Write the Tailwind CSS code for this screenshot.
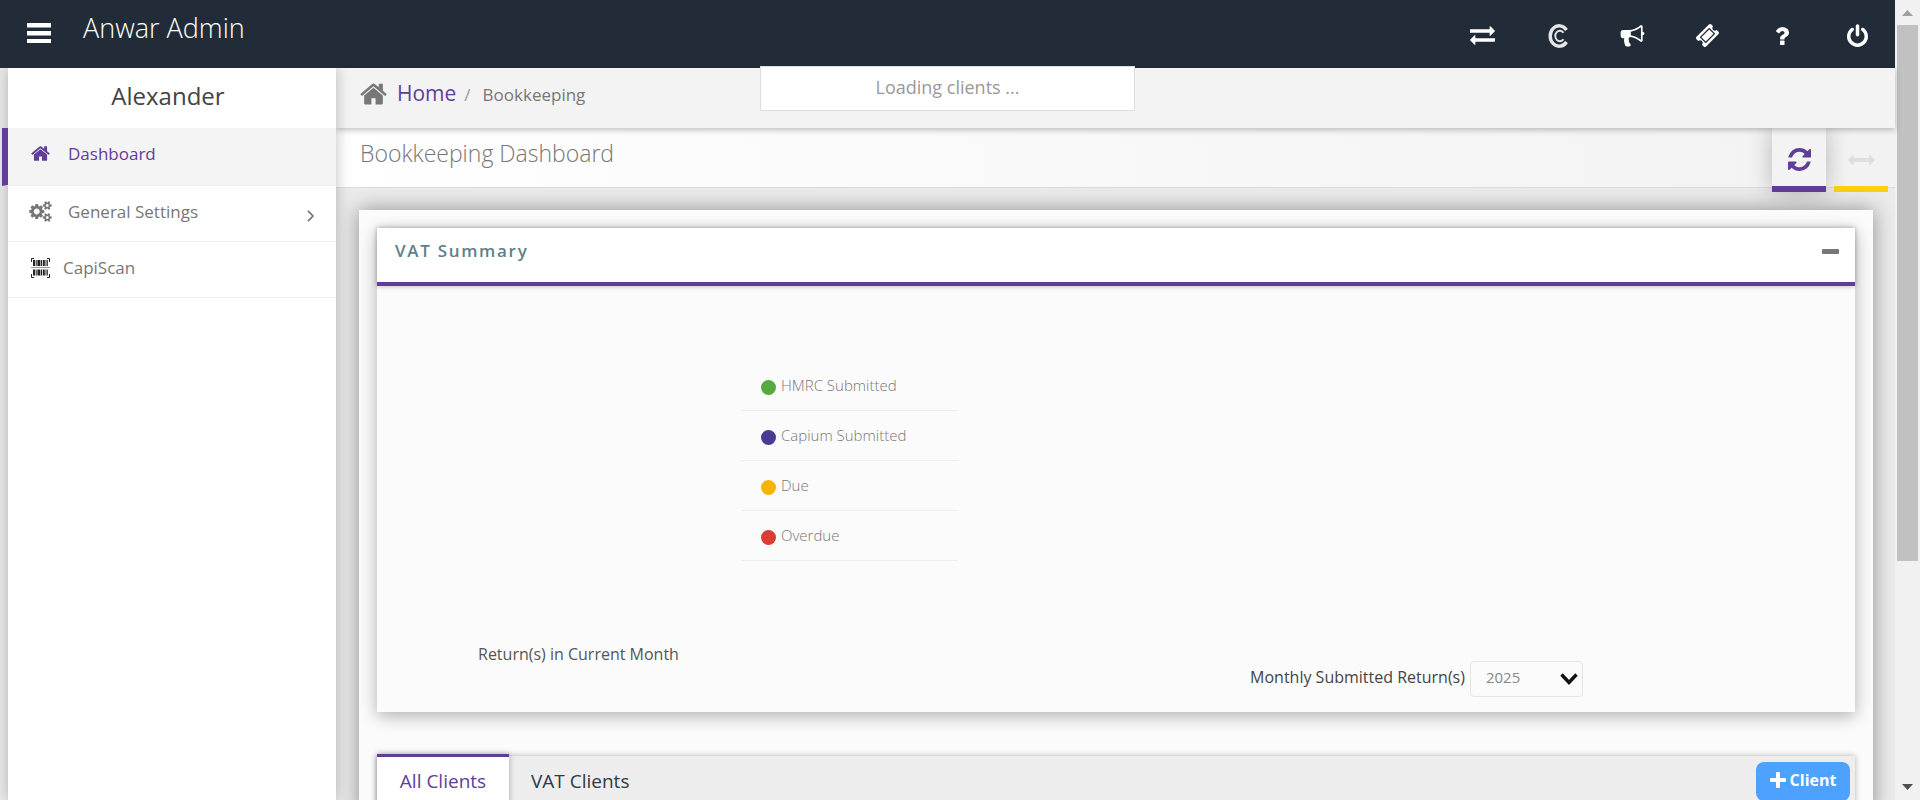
<!DOCTYPE html>
<html lang="en">
<head>
<meta charset="utf-8">
<title>Bookkeeping Dashboard</title>
<script src="https://cdn.jsdelivr.net/npm/@tailwindcss/browser@4"></script>
</head>
<body class="relative flex h-screen overflow-hidden bg-[#ebebeb] font-['Open_Sans','Noto_Sans',sans-serif] text-[#777]">
<svg class="hidden">
  <symbol id="home" viewBox="0 253 1664 1283"><path d="M1408 992v480q0 26-19 45t-45 19H960v-384H704v384H320q-26 0-45-19t-19-45V992q0-1 .5-3t.5-3l575-474 575 474q1 2 1 6zm223-69l-62 74q-8 9-21 11h-3q-13 0-21-7L832 424 140 1001q-12 8-24 7-13-2-21-11l-62-74q-8-10-7-23.500t11-21.500l719-599q32-26 76-26t76 26l244 204V288q0-14 9-23t23-9h192q14 0 23 9t9 23v408l219 182q10 8 11 21.500t-7 23.500z"/></symbol>
</svg>
<div class="flex min-w-0 flex-1 flex-col">
  <header class="flex h-[68px] shrink-0 items-start bg-[#222c38] text-white">
    <button class="ml-[27px] mt-[23px]" aria-label="Toggle menu">
      <svg class="h-5 w-6" viewBox="0 0 24 20" fill="currentColor"><path d="M0 0h24v4.500H0zM0 8h24v4.500H0zM0 16h24v4H0z"/></svg>
    </button>
    <span class="ml-8 text-[27px] font-light leading-14">Anwar Admin</span>
    <nav class="ml-auto flex h-[71px] items-center" aria-label="Tools">
      <button class="flex w-[75px] justify-center" aria-label="Switch"><svg class="h-[19px] w-[25px]" viewBox="0 288 1792 1344" fill="currentColor"><path d="M1792 1184v192q0 13-9.500 22.500t-22.500 9.500H384v192q0 13-9.500 22.500T352 1632q-12 0-24-10L9 1302q-9-9-9-22 0-14 9-23l320-320q9-9 23-9 13 0 22.500 9.500t9.500 22.500v192h1376q13 0 22.500 9.500t9.500 22.500zm0-544q0 14-9 23l-320 320q-9 9-23 9-13 0-22.500-9.500t-9.500-22.500V768H32q-13 0-22.500-9.500T0 736V544q0-13 9.500-22.500T32 512h1376V320q0-14 9-23t23-9q12 0 24 10l319 319q9 9 9 23z"/></svg></button>
      <button class="flex w-[75px] justify-center" aria-label="Capium"><svg class="h-6 w-5" viewBox="0 0 20 24" fill="none" stroke="#e4e6e8"><path stroke-width="3.400" d="M18.500 6A9 10.200 0 1 0 18.500 18"/><path stroke-width="1.900" d="M15.500 8.800A4.600 5.200 0 1 0 15.500 15.200"/></svg></button>
      <button class="flex w-[75px] justify-center" aria-label="Announcements"><svg class="h-[22px] w-[25px]" viewBox="0 128 1792 1664" fill="currentColor"><path d="M1664 640q53 0 90.500 37.500t37.500 90.500-37.500 90.500-90.500 37.500v384q0 52-38 90t-90 38q-417-347-812-380-58 19-91 66t-31 100.500 40 92.500q-20 33-23 65.500t6 58 33.500 55 48 50T768 1664q-29 58-111.500 83t-168.500 11.500-132-55.500q-7-23-29.500-87.500t-32-94.500-23-89-15-101 3.500-98 22-110.500H160q-66 0-113-47T0 864V672q0-66 47-113t113-47h480q435 0 896-384 52 0 90 38t38 90v384zm-128 604V292q-394 302-768 343v270q377 42 768 339z"/></svg></button>
      <button class="flex w-[75px] justify-center" aria-label="Tickets"><svg class="size-[23px]" viewBox="54 54 1685 1685" fill="currentColor"><path d="M1024 452l316 316-572 572-316-316zm-211 979l618-618q19-19 19-45t-19-45l-362-362q-18-18-45-18t-45 18L361 979q-19 19-19 45t19 45l362 362q18 18 45 18t45-18zm889-637l-907 908q-37 37-90.500 37t-90.500-37l-126-126q56-56 56-136t-56-136-136-56-136 56L91 1178q-37-37-37-90.500T91 997L998 91q37-37 90.500-37t90.500 37l125 125q-56 56-56 136t56 136 136 56 136-56l126 125q37 37 37 90.500t-37 90.500z"/></svg></button>
      <button class="flex w-[75px] justify-center" aria-label="Help"><svg class="h-[18px] w-[13px]" viewBox="96 192 924 1280" fill="currentColor"><path d="M704 1192v240q0 16-12 28t-28 12H424q-16 0-28-12t-12-28v-240q0-16 12-28t28-12h240q16 0 28 12t12 28zm316-600q0 54-15.500 101t-35 76.500-55 59.500-57.500 43.500-61 35.500q-41 23-68.500 65t-27.500 67q0 17-12 32.500t-28 15.500H420q-15 0-25.500-18.500T384 1032v-45q0-83 65-156.500T592 722q59-27 84-56t25-76q0-42-46.500-74T547 484q-65 0-108 29-35 25-107 115-13 16-31 16-12 0-25-8L112 511q-13-10-15.500-25t5.500-28q160-266 464-266 80 0 161 31t146 83 106 127.500T1020 592z"/></svg></button>
      <button class="flex w-[75px] justify-center" aria-label="Log out"><svg class="h-[23px] w-[21px]" viewBox="0 0 1536 1664" fill="currentColor"><path d="M1536 896q0 156-61 298t-164 245-245 164-298 61-298-61-245-164-164-245-61-298q0-182 80.500-343T306 283q43-32 95.500-25t83.500 50q32 42 24.500 94.500T461 487q-98 74-151.500 181T256 896q0 104 40.500 198.500T406 1258t163.500 109.500T768 1408t198.500-40.500T1130 1258t109.500-163.500T1280 896q0-121-53.500-228T1075 487q-42-32-49.500-84.500T1050 308q31-43 84-50t95 25q146 110 226.500 271t80.500 342zM896 128v640q0 52-38 90t-90 38-90-38-38-90V128q0-52 38-90t90-38 90 38 38 90z"/></svg></button>
    </nav>
  </header>

  <div class="flex min-h-0 flex-1">
    <aside class="z-10 ml-2 w-[328px] shrink-0 bg-white shadow-[0_0_14px_rgba(0,0,0,0.25)] [clip-path:inset(0_-20px_0_-20px)]">
      <h2 class="h-15 text-center text-2xl leading-14 text-[#444]"><span class="pr-2">Alexander</span></h2>
      <nav class="text-[17px]" aria-label="Main">
        <a href="#" class="-ml-1.5 flex h-[58px] items-center border-b border-l-6 border-b-[#eee] border-l-[#613d98] bg-[#f4f4f4] pb-1.5 pl-[23px] text-[#613d98]">
          <svg class="mr-[18px] h-[15px] w-[19px]" fill="currentColor"><use href="#home"/></svg>Dashboard
        </a>
        <a href="#" class="flex h-14 items-center border-b border-[#eee] pb-1 pl-[21px] pr-[22px]">
          <svg class="mr-4 h-[21px] w-[23px]" viewBox="0 0 1920 1792" fill="currentColor"><path d="M896 896q0-106-75-181t-181-75-181 75-75 181 75 181 181 75 181-75 75-181zm768 512q0-52-38-90t-90-38-90 38-38 90q0 53 37.500 90.500t90.500 37.500 90.500-37.500 37.500-90.500zm0-1024q0-52-38-90t-90-38-90 38-38 90q0 53 37.500 90.500T1536 512t90.500-37.500T1664 384zm-384 421v185q0 10-7 19.500t-16 10.500l-155 24q-11 35-32 76 34 48 90 115 7 11 7 20 0 12-7 19-23 30-82.500 89.500T999 1423q-11 0-21-7l-115-90q-37 19-77 31-11 108-23 155-7 24-30 24H547q-11 0-20-7.500t-10-17.500l-23-153q-34-10-75-31l-118 89q-7 7-20 7-11 0-21-8-144-133-144-160 0-9 7-19 10-14 41-53t47-61q-23-44-35-82l-152-24q-10-1-17-9.500T0 987V802q0-10 7-19.500T23 772l155-24q11-35 32-76-34-48-90-115-7-11-7-20 0-12 7-20 22-30 82-89t79-59q11 0 21 7l115 90q34-18 77-32 11-108 23-154 7-24 30-24h186q11 0 20 7.500t10 17.500l23 153q34 10 75 31l118-89q8-7 20-7 11 0 21 8 144 133 144 160 0 8-7 19-12 16-42 54t-45 60q23 48 34 82l152 23q10 2 17 10.500t7 19.500zm640 533v140q0 16-149 31-12 27-30 52 51 113 51 138 0 4-4 7-122 71-124 71-8 0-46-47t-52-68q-20 2-30 2t-30-2q-14 21-52 68t-46 47q-2 0-124-71-4-3-4-7 0-25 51-138-18-25-30-52-149-15-149-31v-140q0-16 149-31 13-29 30-52-51-113-51-138 0-4 4-7 4-2 35-20t59-34 30-16q8 0 46 46.500t52 67.500q20-2 30-2t30 2q51-71 92-112l6-2q4 0 124 70 4 3 4 7 0 25-51 138 17 23 30 52 149 15 149 31zm0-1024v140q0 16-149 31-12 27-30 52 51 113 51 138 0 4-4 7-122 71-124 71-8 0-46-47t-52-68q-20 2-30 2t-30-2q-14 21-52 68t-46 47q-2 0-124-71-4-3-4-7 0-25 51-138-18-25-30-52-149-15-149-31V314q0-16 149-31 13-29 30-52-51-113-51-138 0-4 4-7 4-2 35-20t59-34 30-16q8 0 46 46.500t52 67.500q20-2 30-2t30 2q51-71 92-112l6-2q4 0 124 70 4 3 4 7 0 25-51 138 17 23 30 52 149 15 149 31z"/></svg>General Settings
          <svg class="ml-auto mt-2 h-3 w-[7px]" viewBox="0 0 7 12" fill="none" stroke="currentColor" stroke-width="1.800"><path d="M1 .8 6 6 1 11.200"/></svg>
        </a>
        <a href="#" class="flex h-14 items-center border-b border-[#eee] pb-1 pl-[23px]">
          <svg class="mr-[13px] h-5 w-[19px]" viewBox="0 0 19 20" fill="none" stroke="#222"><path d="M.5 4V.5H3M16 .5h2.500V4M.5 16v3.500H3M16 19.500h2.500V16"/><path stroke="#999" d="M0 9.500h19"/><path stroke-width="6" stroke-dasharray="2 .7 1 .7 3 .6 1 .8" d="M2 5h15M2 14.500h15"/></svg>CapiScan
        </a>
      </nav>
    </aside>

    <main class="flex min-w-0 flex-1 flex-col">
      <nav class="z-[5] flex h-15 shrink-0 items-baseline bg-[#f3f3f3] pl-6 leading-[50px] shadow-[0_2px_6px_rgba(0,0,0,0.25)]" aria-label="Breadcrumb">
        <svg class="mr-2.5 h-[22px] w-[27px] translate-y-1" fill="currentColor"><use href="#home"/></svg>
        <a href="#" class="text-[21px] text-[#613d98]">Home</a>
        <span class="ml-2 text-[17px] text-[#999]">/</span>
        <span class="ml-3 text-[17px]">Bookkeeping</span>
      </nav>
      <div class="flex h-15 shrink-0 items-start border-b border-[#ddd] bg-linear-to-r from-white to-[#f2f2f2] pl-6 pr-[7px]">
        <h1 class="text-[23px] font-light leading-[50px]">Bookkeeping Dashboard</h1>
        <button class="ml-auto flex h-16 w-[54px] items-center justify-center border-b-6 border-[#613d98] bg-[#f3f3f3] pt-[5px] text-[#613d98] shadow-[0_0_24px_rgba(0,0,0,0.25)]" aria-label="Refresh"><svg class="size-[23px]" viewBox="0 0 1536 1536" fill="currentColor"><path d="M1511 928q0 5-1 7-64 268-268 434.500T764 1536q-146 0-282.500-55T238 1324l-129 129q-19 19-45 19t-45-19-19-45V960q0-26 19-45t45-19h448q26 0 45 19t19 45-19 45l-137 137q71 66 161 102t187 36q134 0 250-65t186-179q11-17 53-117 8-23 30-23h192q13 0 22.500 9.500t9.500 22.500zm25-800v448q0 26-19 45t-45 19h-448q-26 0-45-19t-19-45 19-45l138-138Q969 256 768 256q-134 0-250 65T332 500q-11 17-53 117-8 23-30 23H50q-13 0-22.500-9.500T18 608v-7q65-268 270-434.500T768 0q146 0 284 55.500T1297 212l130-129q19-19 45-19t45 19 19 45z"/></svg></button>
        <button class="ml-2 flex h-16 w-[54px] items-center justify-center border-b-6 border-[#ffcf14] pt-[5px] text-[#dedede]" aria-label="Expand width"><svg class="h-[10px] w-[27px]" viewBox="0 576 1792 640" fill="currentColor"><path d="M1792 896q0 26-19 45l-256 256q-19 19-45 19t-45-19-19-45v-128H384v128q0 26-19 45t-45 19-45-19L19 941Q0 922 0 896t19-45l256-256q19-19 45-19t45 19 19 45v128h1024V640q0-26 19-45t45-19 45 19l256 256q19 19 19 45z"/></svg></button>
      </div>

      <div class="ml-[23px] mr-[22px] mt-[22px] flex-1 bg-[#fbfbfb] px-[18px] pt-[18px] shadow-[0_0_20px_rgba(0,0,0,0.4)]">
        <section class="bg-[#fbfbfb] shadow-[0_4px_16px_rgba(0,0,0,0.3)]">
          <div class="flex h-[58px] items-start justify-between border-b-4 border-[#613d98] bg-white pl-[18px] pr-4 shadow-[0_0_5px_rgba(0,0,0,0.3)]">
            <h3 class="text-[17px] font-semibold leading-[46px] tracking-widest text-[#5f7f8b]">VAT Summary</h3>
            <button class="mt-[21px]" aria-label="Collapse"><svg class="h-[5px] w-[17px]"><rect width="17" height="5" rx="1" fill="#777"/></svg></button>
          </div>
          <div class="grid h-[426px] grid-cols-2">
            <div class="flex items-start">
              <p class="w-[304px] self-end whitespace-nowrap pb-11 pl-[101px] text-base leading-7 text-[#555]">Return(s) in Current Month</p>
              <ul class="ml-[60px] mt-[75px] w-[217px] text-[15px] font-light text-[#777]">
                <li class="flex h-[50px] items-center gap-[5px] border-b border-[#eee] pl-5"><span class="mt-1 size-[15px] rounded-full bg-[#54a93f]"></span>HMRC Submitted</li>
                <li class="flex h-[50px] items-center gap-[5px] border-b border-[#eee] pl-5"><span class="mt-1 size-[15px] rounded-full bg-[#493a94]"></span>Capium Submitted</li>
                <li class="flex h-[50px] items-center gap-[5px] border-b border-[#eee] pl-5"><span class="mt-1 size-[15px] rounded-full bg-[#f6b300]"></span>Due</li>
                <li class="flex h-[50px] items-center gap-[5px] border-b border-[#eee] pl-5"><span class="mt-1 size-[15px] rounded-full bg-[#db3d33]"></span>Overdue</li>
              </ul>
            </div>
            <div class="flex items-end justify-center pb-[15px] pr-[138px]">
              <label for="year" class="mr-[5px] text-base leading-10 text-[#444]">Monthly Submitted Return(s)</label>
              <div class="relative">
                <select id="year" class="h-9 w-[113px] appearance-none rounded border border-[#e5e5e5] bg-transparent pb-1 pl-[15px] text-[15px] text-[#888]"><option>2025</option></select>
                <svg class="pointer-events-none absolute right-[5px] top-3 h-3 w-[18px]" viewBox="0 0 18 12" fill="none" stroke="#111" stroke-width="3.400"><path d="M1.500 1.500 9 9.500l7.500-8"/></svg>
              </div>
            </div>
          </div>
        </section>

        <div class="mt-11 flex h-15 items-start bg-[#ededed] pr-[5px] text-[19px] shadow-[0_0_6px_rgba(0,0,0,0.3)]" role="tablist">
          <button role="tab" aria-selected="true" class="-mt-0.5 h-16 w-[132px] border-t-3 border-[#613d98] bg-white pb-3 text-[#613d98] shadow-[0_0_6px_rgba(0,0,0,0.3)]">All Clients</button>
          <button role="tab" aria-selected="false" class="h-[50px] pl-[22px] text-[#2d3a44]">VAT Clients</button>
          <button class="ml-auto mt-1.5 flex h-[39px] w-[94px] items-center justify-center gap-1 rounded-lg bg-[#4da1ff] pb-1 text-base font-bold text-white"><svg class="size-4" viewBox="0 0 16 16" fill="currentColor"><path d="M6 1q0-1 1-1h2q1 0 1 1v5h5q1 0 1 1v2q0 1-1 1h-5v5q0 1-1 1H7q-1 0-1-1v-5H1q-1 0-1-1V7q0-1 1-1h5z"/></svg>Client</button>
        </div>
      </div>
    </main>
  </div>
</div>

<div class="flex w-[25px] shrink-0 flex-col items-center bg-[#f1f1f1]" aria-hidden="true">
  <svg class="mb-[9px] mt-[10px] h-1.5 w-[11px] shrink-0" viewBox="0 0 11 6" fill="#a0a0a0"><path d="M5.500 0 11 6H0z"/></svg>
  <div class="h-[67%] w-[21px] bg-[#c1c1c1]"></div>
  <svg class="mb-[10px] mt-auto h-1.5 w-[11px] shrink-0" viewBox="0 0 11 6" fill="#505050"><path d="M5.500 6 11 0H0z"/></svg>
</div>

<div role="status" class="absolute inset-x-0 top-[66px] z-20 mx-auto w-[400px] pr-[25px]">
  <div class="h-[45px] border border-[#ddd] bg-white text-center text-lg leading-10 text-[#999]">Loading clients ...</div>
</div>
</body>
</html>
